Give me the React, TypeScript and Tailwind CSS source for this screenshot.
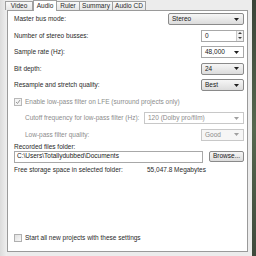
import React from "react";

const F = { fontFamily: '"Liberation Sans", Arial, sans-serif' };

function Arrow({ light }: { light?: boolean }) {
  return (
    <svg width="5" height="3" viewBox="0 0 5 3" className="shrink-0">
      <path d="M0 0h5L2.5 3z" fill={light ? "#a0a0a0" : "#202020"} />
    </svg>
  );
}

function DropList({ value, w }: { value: string; w: string }) {
  return (
    <div
      className={`${w} shrink-0 h-[12px] flex items-center justify-between pl-[3px] pr-[4px] border border-[#8a8a8a] rounded-[2px] bg-gradient-to-b from-[#f6f6f6] to-[#dcdcdc] text-[#202020]`}
    >
      <span>{value}</span>
      <Arrow />
    </div>
  );
}

function Combo({ value, w, disabled }: { value: string; w: string; disabled?: boolean }) {
  return (
    <div
      className={`${w} shrink-0 h-[12px] flex items-center justify-between pl-[3px] pr-[4px] border ${disabled ? "border-[#c8c8c8] text-[#8c8c8c]" : "border-[#a8a8a8] text-[#202020]"} bg-white`}
    >
      <span className="whitespace-nowrap">{value}</span>
      <Arrow light={disabled} />
    </div>
  );
}

function Row({ label, children, indent, disabled }: { label: string; children: React.ReactNode; indent?: boolean; disabled?: boolean }) {
  return (
    <div className="h-[16.5px] shrink-0 flex items-center justify-between">
      <span className={`${indent ? "pl-[11px]" : ""} whitespace-nowrap ${disabled ? "text-[#8c8c8c]" : "text-[#2a2a2a]"}`}>{label}</span>
      {children}
    </div>
  );
}

export default function App() {
  return (
    <div style={F} className="w-[256px] h-[256px] bg-[#ececec] flex text-[6.5px] leading-none overflow-hidden">
      <div className="w-[7px] bg-gradient-to-r from-[#dcdcdc] to-[#efefef]" />
      <div className="w-[245px] flex flex-col">
        <div className="h-[10px] flex items-end relative z-10 -ml-[2px]">
          <div className="w-[28px] h-[9px] border border-b-0 border-[#a0a0a0] bg-gradient-to-b from-[#fafafa] to-[#e6e6e6] flex items-center justify-center text-[#2a2a2a]">Video</div>
          <div className="w-[24px] h-[11px] border border-b-0 border-[#a0a0a0] bg-white flex items-center justify-center text-[#2a2a2a] -mb-[1px]">Audio</div>
          <div className="w-[23px] h-[9px] border border-b-0 border-l-0 border-[#a0a0a0] bg-gradient-to-b from-[#fafafa] to-[#e6e6e6] flex items-center justify-center text-[#2a2a2a]">Ruler</div>
          <div className="w-[33px] h-[9px] border border-b-0 border-l-0 border-[#a0a0a0] bg-gradient-to-b from-[#fafafa] to-[#e6e6e6] flex items-center justify-center text-[#2a2a2a]">Summary</div>
          <div className="w-[33px] h-[9px] border border-b-0 border-l-0 border-[#a0a0a0] bg-gradient-to-b from-[#fafafa] to-[#e6e6e6] flex items-center justify-center text-[#2a2a2a]">Audio CD</div>
        </div>
        <div className="w-[241px] h-[242px] border border-[#9a9a9a] bg-white flex flex-col pl-[6px] pr-[3px]">
          <Row label="Master bus mode:">
            <DropList value="Stereo" w="w-[76px]" />
          </Row>
          <Row label="Number of stereo busses:">
            <div className="w-[43px] shrink-0 h-[12px] flex items-center justify-between pl-[3px] border border-[#a8a8a8] bg-white text-[#202020]">
              <span>0</span>
              <div className="w-[7px] h-full flex flex-col border-l border-[#c8c8c8] bg-[#f0f0f0]">
                <div className="flex-1 flex items-center justify-center">
                  <svg width="4" height="2" viewBox="0 0 4 2"><path d="M0 2h4L2 0z" fill="#404040" /></svg>
                </div>
                <div className="flex-1 flex items-center justify-center">
                  <svg width="4" height="2" viewBox="0 0 4 2"><path d="M0 0h4L2 2z" fill="#404040" /></svg>
                </div>
              </div>
            </div>
          </Row>
          <Row label="Sample rate (Hz):">
            <Combo value="48,000" w="w-[43px]" />
          </Row>
          <Row label="Bit depth:">
            <DropList value="24" w="w-[43px]" />
          </Row>
          <Row label="Resample and stretch quality:">
            <DropList value="Best" w="w-[43px]" />
          </Row>
          <div className="h-[16.5px] shrink-0 flex items-center gap-[3px]">
            <div className="w-[8px] h-[8px] border border-[#b8b8b8] bg-[#f4f4f4] flex items-center justify-center">
              <svg width="6" height="6" viewBox="0 0 6 6"><path d="M1 3l1.5 1.5L5 1" stroke="#9a9a9a" strokeWidth="1" fill="none" /></svg>
            </div>
            <span className="text-[#8c8c8c] whitespace-nowrap">Enable low-pass filter on LFE (surround projects only)</span>
          </div>
          <Row label="Cutoff frequency for low-pass filter (Hz):" indent disabled>
            <Combo value="120 (Dolby pro/film)" w="w-[100px]" disabled />
          </Row>
          <Row label="Low-pass filter quality:" indent disabled>
            <div className="w-[43px] shrink-0 h-[12px] flex items-center justify-between pl-[3px] pr-[4px] border border-[#c8c8c8] bg-[#f6f6f6] text-[#8c8c8c]">
              <span>Good</span>
              <Arrow light />
            </div>
          </Row>
          <div className="h-[7px] shrink-0 flex items-end text-[#2a2a2a]">Recorded files folder:</div>
          <div className="h-[13px] shrink-0 flex items-center justify-between">
            <div className="w-[189px] h-[12px] flex items-center pl-[2px] border border-[#a8a8a8] bg-white text-[#202020] whitespace-nowrap">C:\Users\Totallydubbed\Documents</div>
            <div className="w-[35px] h-[11px] flex items-center justify-center border border-[#8a8a8a] rounded-[2px] bg-gradient-to-b from-[#f6f6f6] to-[#dcdcdc] text-[#202020]">Browse...</div>
          </div>
          <div className="h-[14px] shrink-0 flex items-center text-[#2a2a2a]">
            <span className="w-[133px] whitespace-nowrap">Free storage space in selected folder:</span>
            <span className="whitespace-nowrap">55,047.8 Megabytes</span>
          </div>
          <div className="flex-1" />
          <div className="h-[26px] shrink-0 flex items-center gap-[3px] text-[#2a2a2a]">
            <div className="w-[8px] h-[8px] border border-[#b0b0b0] bg-gradient-to-br from-[#e0e0e0] to-[#f8f8f8]" />
            <span>Start all new projects with these settings</span>
          </div>
        </div>
      </div>
      <div className="w-[4px] bg-gradient-to-b from-[#3a4438] via-[#56684f] to-[#3f4a3c]" />
    </div>
  );
}
